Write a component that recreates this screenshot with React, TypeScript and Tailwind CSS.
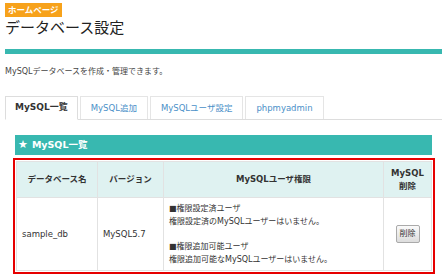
const font = "font-['DejaVu_Sans','Noto_Sans_CJK_JP',sans-serif]";

const tabs = ['MySQL一覧', 'MySQL追加', 'MySQLユーザ設定', 'phpmyadmin'];

const App = () => {
  return (
    <div className={`${font} w-[445px] h-[275px] overflow-hidden bg-white pl-[5px] pt-[3px] text-[#333]`}>
      <div className="w-fit bg-[#f7a21b] px-[3px] text-[8.5px] font-bold leading-[14px] text-white">ホームページ</div>
      <h1 className="mt-[2px] text-[15px] leading-[19px] text-[#222]">データベース設定</h1>
      <div className="mt-[11px] h-[5px] w-[437px] bg-[#38b8b0]" />
      <p className="mt-[12px] text-[8px] leading-[12px] text-[#444]">MySQLデータベースを作成・管理できます。</p>

      <div className="mt-[18px] flex w-[437px] gap-[2px] border-b border-[#ddd]">
        {tabs.map((t, i) => (
          <div
            key={t}
            className={
              i === 0
                ? 'mb-[-1px] flex h-[24px] items-center border border-b-white border-[#ddd] bg-white px-[9px] text-[9px] font-bold text-[#333]'
                : 'flex h-[23px] items-center border border-b-0 border-[#e5e5e5] px-[10px] text-[8.5px] text-[#4a90c8]'
            }
          >
            {t}
          </div>
        ))}
      </div>

      <div className="ml-[10px] mt-[15px] w-[417px]">
        <div className="flex h-[20px] items-center bg-[#38b8b0] px-[3px] text-[9.5px] font-bold text-white">
          <span className="mr-[4px] text-[11px]">★</span>MySQL一覧
        </div>
      </div>

      <div className="ml-[8px] mt-[3px] w-[422px] border-2 border-[#e60000] p-[1px]">
        <table className="w-full border-collapse text-[8.5px] text-[#333]">
          <thead>
            <tr className="h-[36px] bg-[#dff2f1]">
              <th className="w-[81px] border border-[#e2e2e2] font-bold">データベース名</th>
              <th className="w-[66px] border border-[#e2e2e2] font-bold">バージョン</th>
              <th className="border border-[#e2e2e2] font-bold">MySQLユーザ権限</th>
              <th className="w-[48px] border border-[#e2e2e2] font-bold leading-[13px]">
                MySQL
                <br />
                削除
              </th>
            </tr>
          </thead>
          <tbody>
            <tr className="h-[73px]">
              <td className="border border-[#e2e2e2] pl-[5px]">sample_db</td>
              <td className="border border-[#e2e2e2] pl-[5px]">MySQL5.7</td>
              <td className="border border-[#e2e2e2] pl-[5px] text-[8px] leading-[13px]">
                <div>■権限設定済ユーザ</div>
                <div>権限設定済のMySQLユーザーはいません。</div>
                <div className="mt-[12px]">■権限追加可能ユーザ</div>
                <div>権限追加可能なMySQLユーザーはいません。</div>
              </td>
              <td className="border border-[#e2e2e2] text-center">
                <button className="h-[18px] rounded-[2px] border border-[#aaa] bg-gradient-to-b from-[#fafafa] to-[#ddd] px-[3px] text-[8px] text-[#333]">
                  削除
                </button>
              </td>
            </tr>
          </tbody>
        </table>
      </div>
    </div>
  );
};

export default App;
